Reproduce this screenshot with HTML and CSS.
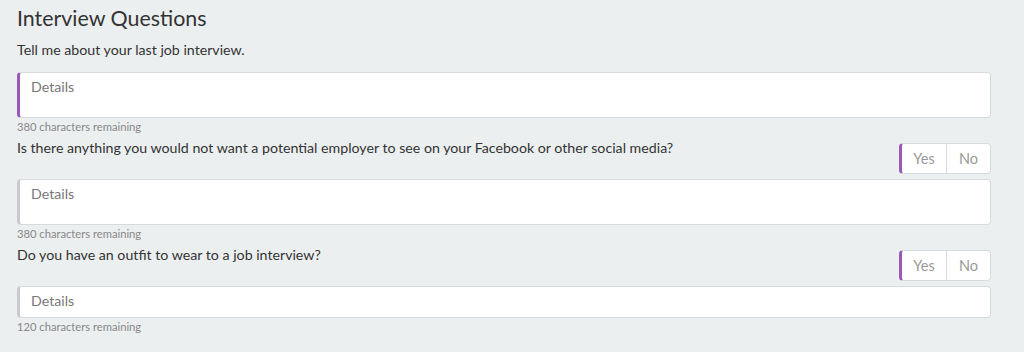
FILE: index.html
```html
<!DOCTYPE html>
<html lang="en">
<head>
  <meta charset="UTF-8">
  <title>Interview Questions</title>
  <link rel="stylesheet" href="styles.css">
</head>
<body>
  <div class="wrap">
    <h2 class="title">Interview Questions</h2>

    <div class="question first">
      <div class="question-row">
        <p class="question-text">Tell me about your last job interview.</p>
      </div>
      <textarea class="details active tall" placeholder="Details"></textarea>
      <div class="counter">380 characters remaining</div>
    </div>

    <div class="question">
      <div class="question-row">
        <p class="question-text">Is there anything you would not want a potential employer to see on your Facebook or other social media?</p>
        <div class="toggle">
          <span class="toggle-btn">Yes</span>
          <span class="toggle-btn">No</span>
        </div>
      </div>
      <textarea class="details tall" placeholder="Details"></textarea>
      <div class="counter">380 characters remaining</div>
    </div>

    <div class="question">
      <div class="question-row">
        <p class="question-text">Do you have an outfit to wear to a job interview?</p>
        <div class="toggle">
          <span class="toggle-btn">Yes</span>
          <span class="toggle-btn">No</span>
        </div>
      </div>
      <textarea class="details short" placeholder="Details"></textarea>
      <div class="counter">120 characters remaining</div>
    </div>
  </div>
</body>
</html>
```

FILE: styles.css
```css
* {
  margin: 0;
  padding: 0;
  box-sizing: border-box;
}
html, body {
  width: 100%;
  height: 100%;
}
body {
  font-family: Lato, "Open Sans", sans-serif;
  font-size: 14.2px;
  color: #333;
  background: #eceff0;
  overflow: hidden;
}
.wrap {
  width: 974px;
  margin-left: 17px;
}
.title {
  font-size: 21.4px;
  font-weight: 400;
  line-height: 36px;
  color: #333;
}
.question-text {
  line-height: 20px;
  margin-top: 3px;
}
.question.first .question-text {
  margin-top: 4px;
}
.question-row {
  display: flex;
  justify-content: space-between;
  align-items: flex-start;
  margin-bottom: 5px;
}
.question.first .question-row {
  margin-bottom: 12px;
}
.toggle {
  display: flex;
  flex-shrink: 0;
  margin-top: 8px;
  height: 31px;
  background: #fff;
  border: 1px solid #d7dbdd;
  border-left: 3px solid #9b59b6;
  border-radius: 4px;
}
.toggle-btn {
  width: 44px;
  line-height: 29px;
  text-align: center;
  color: #999;
  font-size: 14.5px;
}
.toggle-btn + .toggle-btn {
  border-left: 1px solid #d7dbdd;
}
.details {
  display: block;
  width: 100%;
  resize: none;
  font-family: inherit;
  font-size: 14.2px;
  line-height: 20px;
  color: #333;
  padding: 4px 11px;
  background: #fff;
  border: 1px solid #d7dbdd;
  border-left: 3px solid #c7cbcd;
  border-radius: 4px;
  outline: none;
}
.details::placeholder {
  color: #777;
}
.details.active {
  border-left-color: #9b59b6;
}
.details.tall {
  height: 46px;
}
.details.short {
  height: 32px;
  padding-top: 4px;
}
.counter {
  font-size: 11.2px;
  line-height: 16px;
  margin-top: 1px;
  color: #888;
}
```
